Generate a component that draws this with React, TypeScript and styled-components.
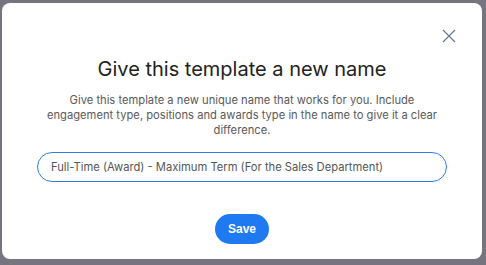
import { useEffect, useRef, useState } from "react";
import styled, { createGlobalStyle } from "styled-components";

const GlobalStyle = createGlobalStyle`
  html, body {
    margin: 0;
    padding: 0;
    height: 100%;
  }
  body {
    background: #76757f;
    font-family: Inter, "Noto Sans", sans-serif;
  }
  #root {
    height: 100%;
  }
`;

const Overlay = styled.div`
  box-sizing: border-box;
  height: 265px;
  padding: 3px 4px 6px 2px;
  display: flex;
`;

const Modal = styled.div`
  flex: 1;
  background: #ffffff;
  border-radius: 8px;
  display: flex;
  flex-direction: column;
  align-items: center;
  padding: 24px 35px 0;
  position: relative;
`;

const CloseButton = styled.button`
  position: absolute;
  top: 25px;
  right: 25px;
  width: 16px;
  height: 16px;
  padding: 0;
  border: none;
  background: none;
  color: #6d7a98;
  cursor: pointer;
  display: flex;
  align-items: center;
  justify-content: center;
`;

const Title = styled.h2`
  margin: 30px 0 0;
  font-size: 20px;
  font-weight: 400;
  color: #222222;
  line-height: 24px;
  text-align: center;
`;

const Description = styled.p`
  margin: 12px 0 0;
  font-size: 11.2px;
  line-height: 15px;
  color: #5a5a5a;
  text-align: center;
`;

const NameInput = styled.input`
  box-sizing: border-box;
  align-self: stretch;
  margin-top: 14px;
  height: 30px;
  border: 1px solid #2f7de6;
  border-radius: 15px;
  padding: 0 13px;
  font-family: inherit;
  font-size: 11.2px;
  color: #555555;
  caret-color: #111111;
  outline: none;
`;

const SaveButton = styled.button`
  margin-top: 32px;
  height: 30px;
  padding: 0 13px;
  border: none;
  border-radius: 15px;
  background: #1f7af2;
  color: #ffffff;
  font-family: "Liberation Sans", Arial, sans-serif;
  font-weight: 700;
  font-size: 12px;
  cursor: pointer;
`;

const CloseIcon = () => (
  <svg width="14" height="14" viewBox="0 0 14 14" fill="none">
    <path d="M1 1L13 13M13 1L1 13" stroke="currentColor" strokeWidth="1.3" />
  </svg>
);

export default function App() {
  const [name, setName] = useState(
    "Full-Time (Award) - Maximum Term (For the Sales Department)"
  );
  const inputRef = useRef<HTMLInputElement>(null);

  useEffect(() => {
    const el = inputRef.current;
    if (el) {
      el.focus();
      el.setSelectionRange(el.value.length, el.value.length);
    }
  }, []);

  return (
    <>
      <GlobalStyle />
      <Overlay>
        <Modal>
          <CloseButton aria-label="Close">
            <CloseIcon />
          </CloseButton>
          <Title>Give this template a new name</Title>
          <Description>
            Give this template a new unique name that works for you. Include
            <br />
            engagement type, positions and awards type in the name to give it a
            clear
            <br />
            difference.
          </Description>
          <NameInput
            ref={inputRef}
            value={name}
            onChange={(e) => setName(e.target.value)}
          />
          <SaveButton>Save</SaveButton>
        </Modal>
      </Overlay>
    </>
  );
}
